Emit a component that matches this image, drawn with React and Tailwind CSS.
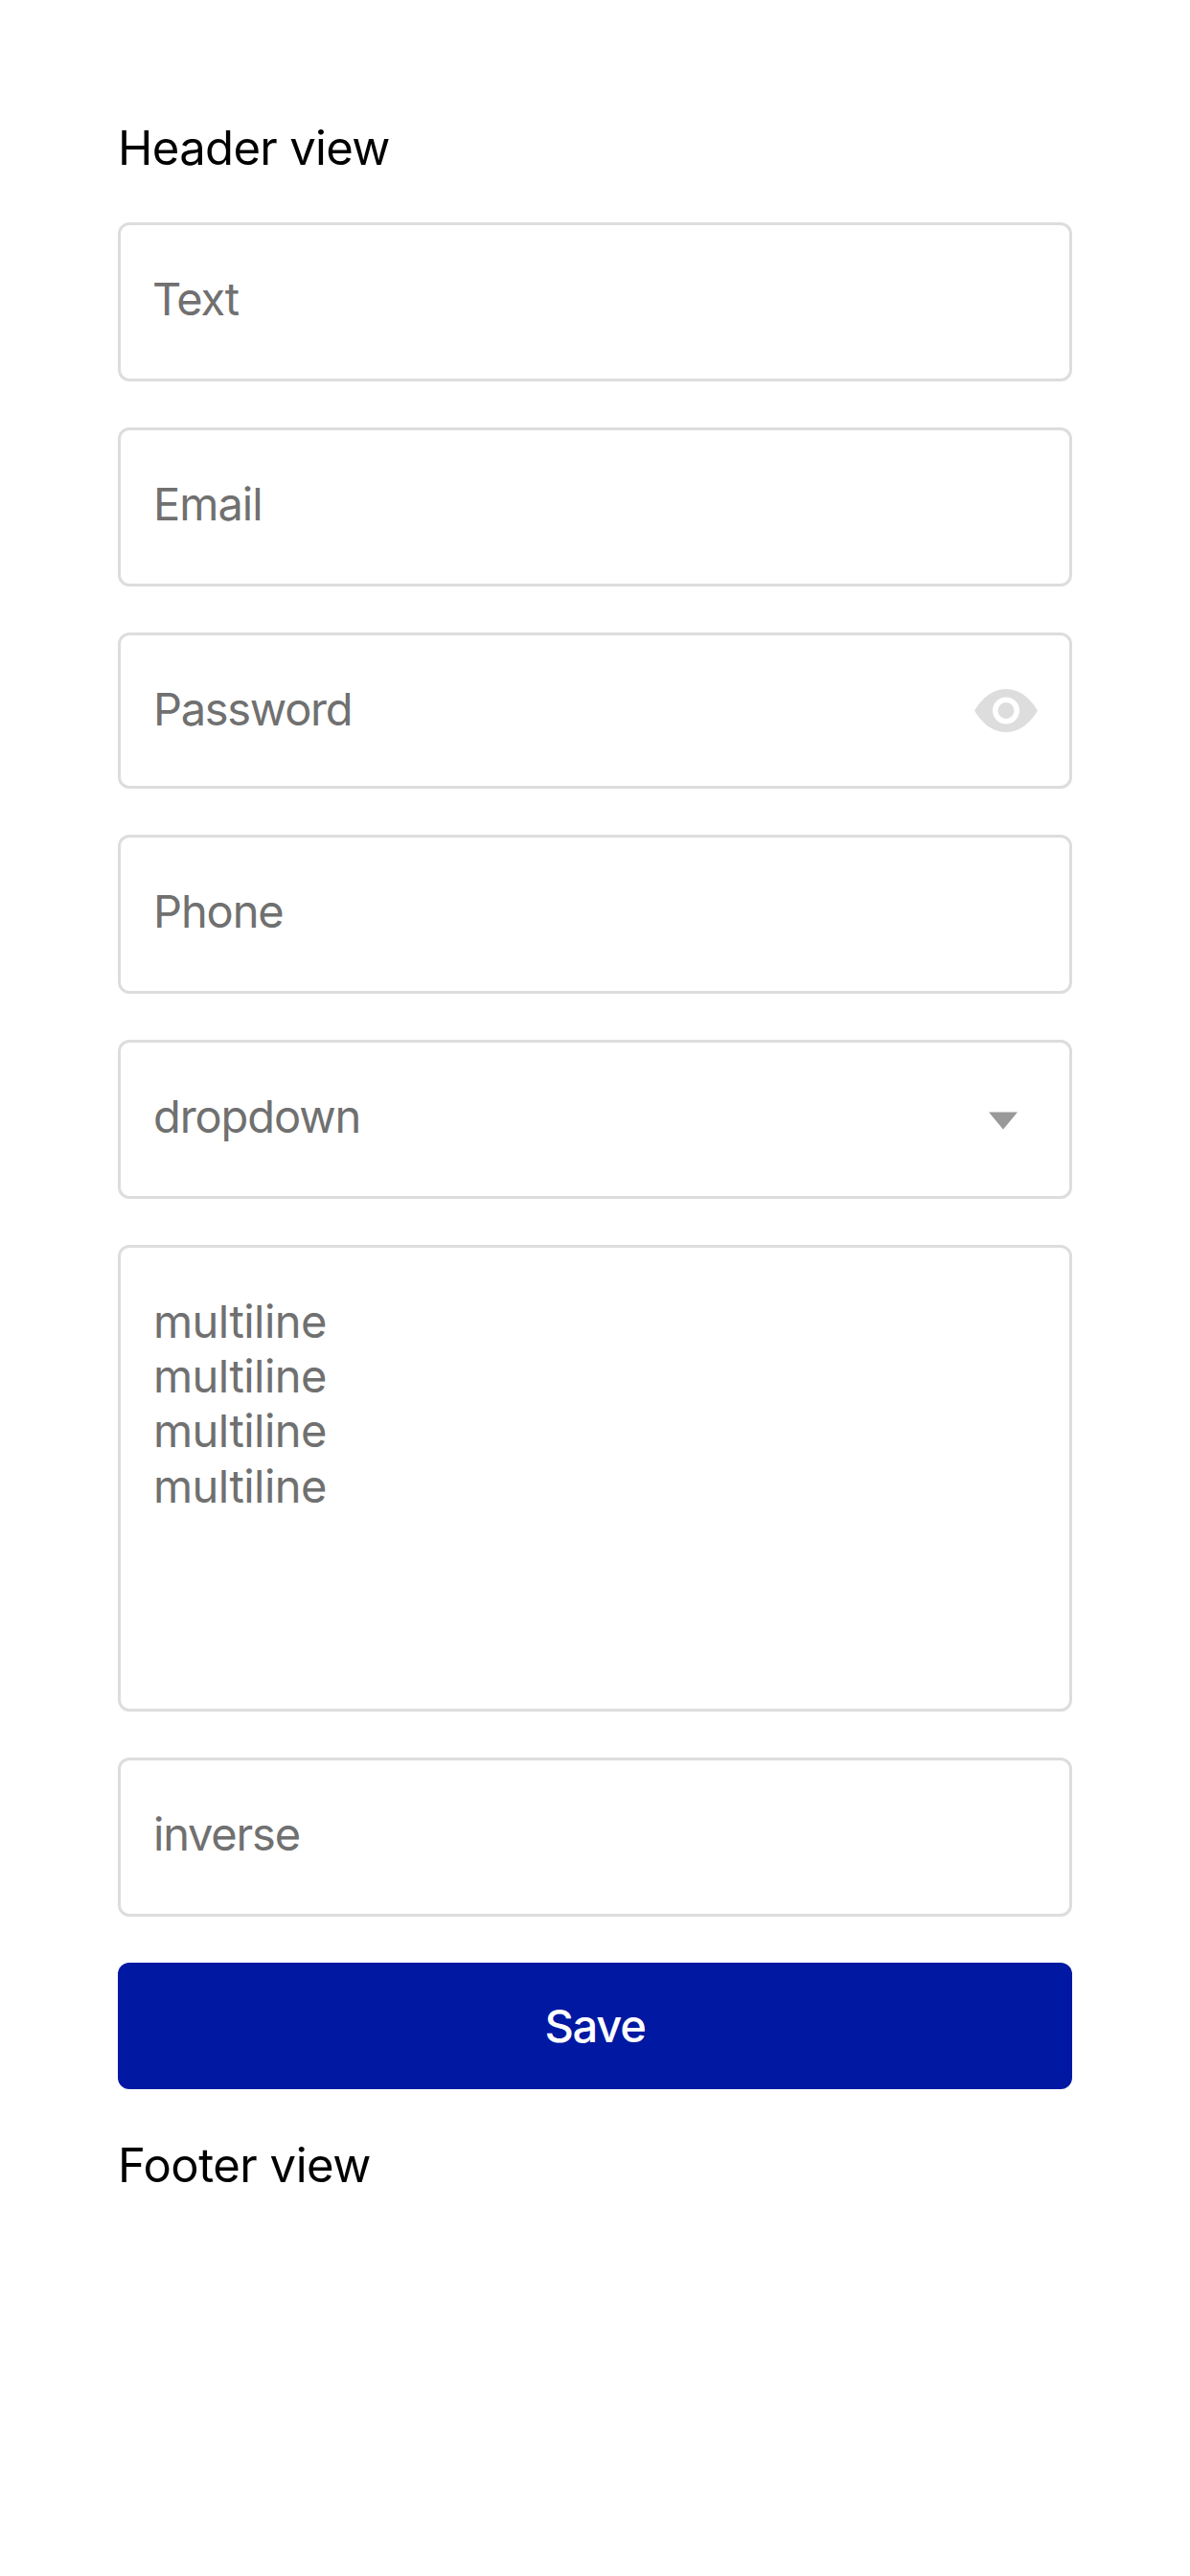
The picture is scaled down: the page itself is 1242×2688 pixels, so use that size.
const fieldBase = "border-[3px] border-[#dddddd] rounded-[12px] pl-[34px] text-[#707070] text-[47px]";

function Field({ label, spacing, height = "h-[166px]", children }) {
  return (
    <div className={`${fieldBase} ${height} flex justify-between pt-[48px]`}>
      <span className={`leading-[57px] ${spacing}`}>{label}</span>
      {children}
    </div>
  );
}

function Eye() {
  return (
    <svg className="mt-[8px] mr-[33px] h-[45px] w-[66px]" viewBox="0 0 66 45" fill="none">
      <path
        d="M0 22.5C6.8 11.5 17.5 0 33 0S59.2 11.5 66 22.5C59.2 33.5 48.5 45 33 45S6.8 33.5 0 22.5Z"
        fill="#dddddd"
      />
      <circle cx="33" cy="22.5" r="11.2" stroke="#ffffff" strokeWidth="5.6" />
    </svg>
  );
}

function Caret() {
  return (
    <svg className="mt-[24px] mr-[54px] h-[19px] w-[30px]" viewBox="0 0 30 19">
      <path d="M0 0.4H30L15 18.4Z" fill="#999999" />
    </svg>
  );
}

export default function App() {
  return (
    <main className="min-h-[2688px] bg-white px-[123px] pt-[124px] font-['Inter',sans-serif] text-black">
      <header className="h-[108px] text-[49px] leading-[61px] tracking-[-0.65px]">Header view</header>
      <form className="flex flex-col gap-[48px]">
        <Field label="Text" spacing="-ml-px tracking-[-1.3px]" />
        <Field label="Email" spacing="tracking-[-1px]" />
        <Field label="Password" spacing="tracking-[-1.3px]" height="h-[163px]">
          <Eye />
        </Field>
        <Field label="Phone" spacing="tracking-[-1.1px]" />
        <Field label="dropdown" spacing="tracking-[-1.1px]">
          <Caret />
        </Field>
        <div className={`${fieldBase} h-[487px] pt-[48px] leading-[57.2px] tracking-[-0.55px]`}>
          {[0, 1, 2, 3].map((line) => (
            <div key={line}>multiline</div>
          ))}
        </div>
        <Field label="inverse" spacing="tracking-[-1.2px]" />
        <button
          type="button"
          className="h-[132px] rounded-[12px] bg-[#0018a2] pb-[2px] text-[47px] font-medium leading-[57px] tracking-[-1.2px] text-white"
        >
          Save
        </button>
      </form>
      <footer className="pt-[49px] text-[49px] leading-[61px] tracking-[-0.5px]">Footer view</footer>
    </main>
  );
}
